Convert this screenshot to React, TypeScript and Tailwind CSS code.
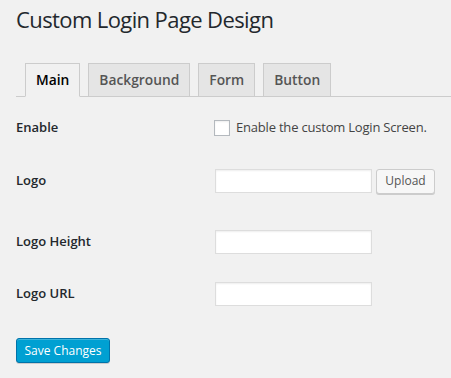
import { useState } from "react";

const tabs = ["Main", "Background", "Form", "Button"];

export default function App() {
  const [active, setActive] = useState("Main");
  const [enabled, setEnabled] = useState(false);

  return (
    <div className="min-h-[378px] w-[451px] bg-[#f1f1f1] pl-4 text-[#23282d] font-['Open_Sans',sans-serif]">
      <h1 className="pt-[5px] text-[22px] leading-[29px] font-normal tracking-[-0.6px]">Custom Login Page Design</h1>

      {/* tabs */}
      <div className="mt-[29px] flex border-b border-[#ccc] pl-px">
        {tabs.map((t) => {
          const on = t === active;
          return (
            <button
              key={t}
              onClick={() => setActive(t)}
              className={
                "ml-[8px] -mb-px border border-[#ccc] px-[10px] py-[4px] text-[13.8px] leading-[24px] font-semibold " +
                (on ? "border-b-[#f1f1f1] bg-[#f1f1f1] text-black" : "bg-[#e5e5e5] text-[#555]")
              }
            >
              {t}
            </button>
          );
        })}
      </div>

      {/* form rows */}
      <div className="mt-[19px] flex h-6 items-center">
        <div className="w-[198px] text-[13px] font-semibold">Enable</div>
        <label className="flex items-center text-[13px] tracking-[-0.2px] text-[#444]">
          <input
            type="checkbox"
            checked={enabled}
            onChange={(e) => setEnabled(e.target.checked)}
            className="h-4 w-4 appearance-none border border-[#b4b9be] bg-white shadow-[inset_0_1px_2px_rgba(0,0,0,0.07)]"
          />
          <span className="ml-[6px]">Enable the custom Login Screen.</span>
        </label>
      </div>

      <div className="mt-[29px] flex h-6 items-center">
        <div className="w-[199px] text-[13px] font-semibold">Logo</div>
        <input className="h-[24px] w-[157px] border border-[#ddd] bg-white shadow-[inset_0_1px_2px_rgba(0,0,0,0.07)]" />
        <button className="ml-1 h-[25px] w-[59px] rounded-[3px] border border-[#ccc] bg-[#f7f7f7] text-[12px] text-[#555] shadow-[0_1px_0_#ccc]">
          Upload
        </button>
      </div>

      <div className="mt-[37px] flex h-6 items-center">
        <div className="w-[199px] text-[13px] font-semibold">Logo Height</div>
        <input className="h-[24px] w-[157px] border border-[#ddd] bg-white shadow-[inset_0_1px_2px_rgba(0,0,0,0.07)]" />
      </div>

      <div className="mt-[28px] flex h-6 items-center">
        <div className="w-[199px] text-[13px] font-semibold">Logo URL</div>
        <input className="h-[24px] w-[157px] border border-[#ddd] bg-white shadow-[inset_0_1px_2px_rgba(0,0,0,0.07)]" />
      </div>

      <button className="mt-[32px] h-[25px] w-[94px] rounded-[3px] border border-[#0073aa] bg-[#00a0d2] text-[12px] font-medium text-white shadow-[inset_0_1px_0_rgba(120,200,230,0.5),0_1px_0_rgba(0,0,0,0.15)]">
        Save Changes
      </button>
    </div>
  );
}
